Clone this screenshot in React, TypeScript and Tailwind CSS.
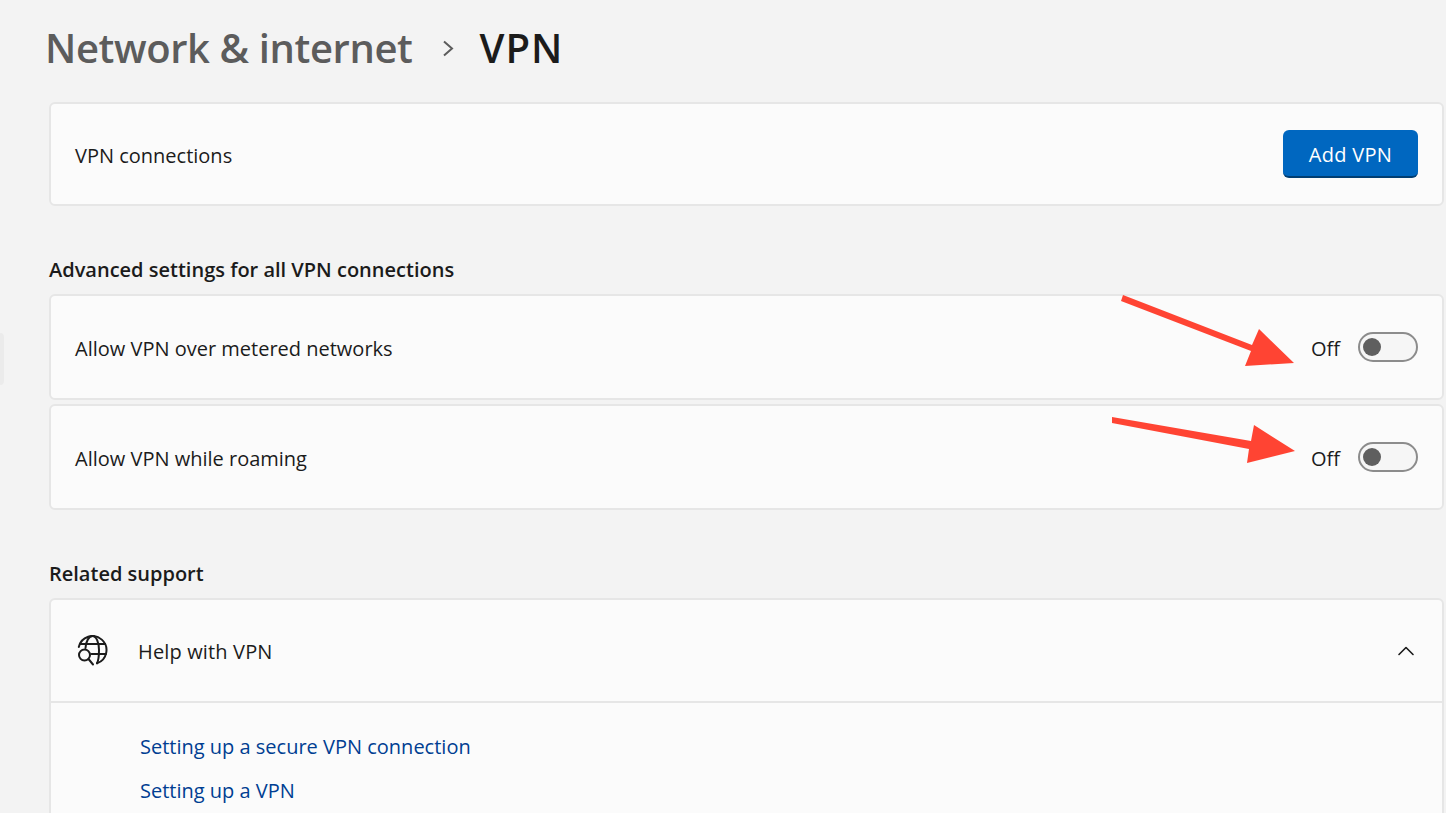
import React from 'react';
import { ChevronUp } from 'lucide-react';

function Toggle() {
  return (
    <div className="flex items-center gap-[18px]">
      <span className="pt-[4px] text-[20px] leading-[28px] text-[#1b1b1b]">Off</span>
      <div className="flex h-[30px] w-[60px] items-center rounded-full border-2 border-[#8c8c8c] bg-[#f6f6f6] pl-[3px]">
        <div className="h-[18px] w-[18px] rounded-full bg-[#5f5f5f]" />
      </div>
    </div>
  );
}

function Card({ children, className }: { children: React.ReactNode; className: string }) {
  return (
    <div className={`flex items-center justify-between rounded-[6px] border-2 border-[#e6e6e6] bg-[#fbfbfb] pl-[24px] pr-[24px] ${className}`}>
      {children}
    </div>
  );
}

function HelpGlobe() {
  return (
    <svg width="32" height="32" viewBox="0 0 32 32" fill="none" stroke="#1b1b1b" strokeWidth="2" strokeLinecap="round">
      <path d="M1.8 12A14 14 0 1 1 20 28.3" />
      <path d="M8.5 13C9 6 12 1 15.5 1C19.5 1 22 8 22 15C22 22 21.5 25.5 20 28.3" />
      <path d="M3.5 9H28" />
      <path d="M14.5 19H29" />
      <circle cx="7.5" cy="20" r="5.5" />
      <path d="M11.5 24L16 29.5" />
    </svg>
  );
}

export default function App() {
  return (
    <div className="relative h-[813px] w-[1446px] overflow-hidden bg-[#f3f3f3] font-['Open_Sans','Noto_Sans',sans-serif] text-[#1b1b1b]">
      <div className="absolute left-0 top-[333px] h-[52px] w-[4px] rounded-r-[4px] bg-[#ebebeb]" />

      <div className="flex h-[102px] items-start pl-[45px] pt-[21px]">
        <span className="text-[40px] font-semibold leading-[54px] tracking-[-0.4px] text-[#5c5c5c]">Network &amp; internet</span>
        <svg className="ml-[29px] mt-[19px]" width="13" height="17" viewBox="0 0 13 17" fill="none" stroke="#5c5c5c" strokeWidth="2">
          <path d="M2 1.5L10 8.5L2 15.5" />
        </svg>
        <span className="ml-[25px] text-[40px] font-semibold leading-[54px] tracking-[1px] text-[#1b1b1b]">VPN</span>
      </div>

      <div className="ml-[49px] mr-[2px] flex flex-col">
        <Card className="h-[104px]">
          <span className="pt-[4px] text-[20px]">VPN connections</span>
          <button className="h-[48px] w-[135px] rounded-[6px] border-b-2 border-[#003e73] bg-[#0067c0] pt-[4px] text-[20px] tracking-[0.3px] text-white">
            Add VPN
          </button>
        </Card>

        <h2 className="mt-[48px] h-[40px] pt-[1px] text-[20px] font-semibold leading-[30px]">
          Advanced settings for all VPN connections
        </h2>

        <div className="flex flex-col gap-[4px]">
          <Card className="h-[106px]">
            <span className="pt-[4px] text-[20px]">Allow VPN over metered networks</span>
            <Toggle />
          </Card>
          <Card className="h-[106px]">
            <span className="pt-[4px] text-[20px]">Allow VPN while roaming</span>
            <Toggle />
          </Card>
        </div>

        <h2 className="mt-[48px] h-[40px] pt-[1px] text-[20px] font-semibold leading-[30px]">Related support</h2>

        <div className="h-[300px] rounded-[6px] border-2 border-[#e6e6e6] bg-[#fbfbfb]">
          <div className="flex h-[103px] items-center justify-between border-b-2 border-[#e6e6e6] pl-[26px] pr-[22px]">
            <div className="flex items-center gap-[29px]">
              <HelpGlobe />
              <span className="pt-[2px] text-[20px] tracking-[0.15px]">Help with VPN</span>
            </div>
            <ChevronUp size={28} strokeWidth={1.4} />
          </div>
          <div className="flex flex-col gap-[14px] pl-[89px] pt-[29px] text-[20px] leading-[30px] text-[#003e92]">
            <a>Setting up a secure VPN connection</a>
            <a>Setting up a VPN</a>
          </div>
        </div>
      </div>

      <svg className="absolute left-0 top-0" width="1446" height="813" fill="#ff4433">
        <polygon points="1123,295 1252,345 1259,329 1294,363 1245,366 1251,351 1121,301" />
        <polygon points="1112,417 1251,441 1254,425 1295,451 1247,463 1249,449 1112,423" />
      </svg>
    </div>
  );
}
